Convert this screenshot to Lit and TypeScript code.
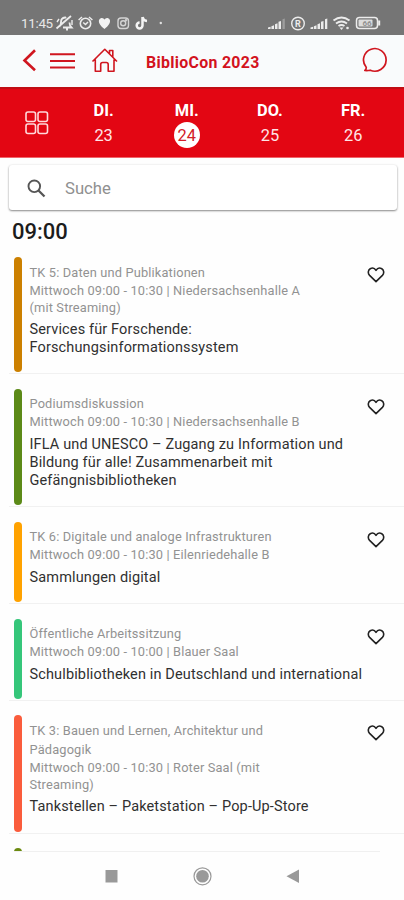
import { LitElement, html, css, svg } from "lit";
import { customElement, property } from "lit/decorators.js";
import { classMap } from "lit/directives/class-map.js";

interface Session {
  color: string;
  track: string[];
  meta: string[];
  title: string[];
}

const DAYS = [
  { name: "DI.", date: "23", active: false },
  { name: "MI.", date: "24", active: true },
  { name: "DO.", date: "25", active: false },
  { name: "FR.", date: "26", active: false },
];

const SESSIONS: Session[] = [
  {
    color: "#cc8000",
    track: ["TK 5: Daten und Publikationen"],
    meta: ["Mittwoch 09:00 - 10:30 | Niedersachsenhalle A", "(mit Streaming)"],
    title: ["Services für Forschende:", "Forschungsinformationssystem"],
  },
  {
    color: "#5c8a18",
    track: ["Podiumsdiskussion"],
    meta: ["Mittwoch 09:00 - 10:30 | Niedersachsenhalle B"],
    title: ["IFLA und UNESCO – Zugang zu Information und", "Bildung für alle! Zusammenarbeit mit", "Gefängnisbibliotheken"],
  },
  {
    color: "#ffa200",
    track: ["TK 6: Digitale und analoge Infrastrukturen"],
    meta: ["Mittwoch 09:00 - 10:30 | Eilenriedehalle B"],
    title: ["Sammlungen digital"],
  },
  {
    color: "#35c67a",
    track: ["Öffentliche Arbeitssitzung"],
    meta: ["Mittwoch 09:00 - 10:00 | Blauer Saal"],
    title: ["Schulbibliotheken in Deutschland und international"],
  },
  {
    color: "#fa5c3c",
    track: ["TK 3: Bauen und Lernen, Architektur und", "Pädagogik"],
    meta: ["Mittwoch 09:00 - 10:30 | Roter Saal (mit", "Streaming)"],
    title: ["Tankstellen – Paketstation – Pop-Up-Store"],
  },
  { color: "#6b8a10", track: [], meta: [], title: [] },
];

@customElement("session-row")
export class SessionRow extends LitElement {
  @property({ attribute: false }) session!: Session;

  static styles = css`
    :host { display: block; margin-left: 9px; }
    .row { display: flex; padding: 0 0 1px 5px; border-bottom: 1px solid #f1f1f1; margin-bottom: 14.4px; }
    .bar { width: 8px; border-radius: 4px; flex: none; }
    .text { flex: 1; min-width: 0; min-height: 60px; padding: 5.5px 0 14.9px 7.5px; white-space: nowrap; }
    .track { font-size: 12.8px; line-height: 19px; color: #929292; letter-spacing: 0.16px; }
    .meta { font-size: 12.8px; line-height: 17px; color: #929292; letter-spacing: 0.16px; }
    .title { margin-top: 5.6px; font-size: 14.5px; line-height: 18.2px; color: #303030; letter-spacing: 0.14px; }
    .heart { flex: none; width: 18px; height: 16px; margin: 10px 19px 0 0; }
  `;

  render() {
    const s = this.session;
    return html`<div class="row">
      <div class="bar" style="background:${s.color}"></div>
      <div class="text">
        ${s.track.map((t) => html`<div class="track">${t}</div>`)}
        ${s.meta.map((t) => html`<div class="meta">${t}</div>`)}
        <div class="title">${s.title.map((t) => html`<div>${t}</div>`)}</div>
      </div>
      <svg class="heart" viewBox="0 0 18 16" fill="none" stroke="#222" stroke-width="1.6" stroke-linejoin="round">
        <path d="M9 14.6 2.6 8.4C.6 6.300 1 3 3.200 1.700 5.300.600 7.700 1.200 9 3.400 10.300 1.200 12.700.600 14.800 1.700 17 3 17.400 6.300 15.400 8.400Z" />
      </svg>
    </div>`;
  }
}

const signal = (last: string) => svg`
  <path d="M0 12v-1.500l2.600-.7V12zM3.400 12V9.200l2.600-.9V12zM7 12V7.200l2.500-.9V12zM10.500 12V4.800l2.500-.9V12z" fill="#ececec"/>
  <path d="M14.500 12V2.300l2.300-.8V12z" fill=${last}/>`;

@customElement("app-root")
export class AppRoot extends LitElement {
  static styles = css`
    :host { display: flex; flex-direction: column; width: 404px; height: 900px; overflow: hidden; background: #fefefe; font-family: Roboto, "Liberation Sans", sans-serif; }
    .status { height: 35px; flex: none; box-sizing: border-box; padding: 13px 0 0 21px; display: flex; background: #757575; color: #e8e8e8; }
    .clock { font-size: 13.4px; line-height: 21px; width: 34px; letter-spacing: -0.3px; white-space: nowrap; }
    .status svg { flex: none; display: block; }
    .status .right { margin-left: 100px; }
    .header { height: 52px; flex: none; display: flex; align-items: center; background: #f9fbfc; box-sizing: border-box; padding: 0 0 1px 22px; }
    .header svg { flex: none; display: block; }
    .brand { flex: none; width: 216px; margin-left: 28px; padding-top: 4px; font-size: 15.9px; line-height: 20px; font-weight: 700; letter-spacing: 0.3px; color: #d3131d; }
    .days { height: 71px; flex: none; box-sizing: border-box; border-top: 2px solid #c00d14; border-bottom: 1px solid #f0666c; background: #e30613; color: #fff; display: flex; padding-left: 25px; }
    .grid { width: 24px; height: 24px; margin: 22px 13px 0 0; flex: none; }
    .day { width: 83.2px; flex: none; display: flex; flex-direction: column; align-items: center; padding-top: 11px; }
    .name { font-size: 16.4px; line-height: 21px; font-weight: 700; }
    .date { width: 26px; height: 26px; margin-top: 1px; border-radius: 50%; font-size: 16.4px; line-height: 28px; text-align: center; color: #ffe5e6; }
    .date.active { background: #fff; color: #d3202a; }
    .search { flex: none; height: 45px; margin: 7px 7px 0 9px; display: flex; align-items: center; border-radius: 3px; background: #fff; box-shadow: 0 1px 2px rgba(0, 0, 0, 0.45), 0 0 3px rgba(0, 0, 0, 0.06); box-sizing: border-box; padding: 1px 0 0 18px; font-size: 16.7px; color: #909090; }
    .search svg { margin: 1px 19px 0 0; width: 19px; height: 19px; }
    .hour { flex: none; height: 47px; padding: 9px 0 0 12px; box-sizing: border-box; font-size: 22px; line-height: 26px; font-weight: 500; color: #1c1c1c; }
    .list { height: 594px; flex: none; overflow: hidden; }
    .nav { flex: 1; display: flex; justify-content: center; border-top: 1px solid #f0f0f0; margin: 0 24px 0 14px; }
    .nav svg { display: block; flex: none; width: 200px; height: 30px; margin: 10px 0 0 9px; }
  `;

  render() {
    return html`
      <div class="status">
        <div class="clock">11:45</div>
        <svg width="112" height="20" viewBox="55 13 112 20" fill="none" stroke="#ececec" stroke-width="1.400">
          <path d="M56.500 28.500 71 16M59.500 26.500q1.500-1.500 1.500-4.500 0-4 4-4.500M63 27.500h8.500q-2-2-2-5M66 17l-1 1M66 29.500h2" stroke-width="1.800"/>
          <path d="m57 22 2-3M72 20v5" />
          <circle cx="85.500" cy="23.500" r="5.200" stroke-width="1.600"/>
          <path d="M83.200 22.500 85.500 24.500 88 22M78.600 20l3.400-3M92.400 20l-3.400-3" stroke-width="1.500"/>
          <path d="M104.500 29C96 22.500 99 18 102 18q1.700 0 2.500 1.500Q105.300 18 107 18c3 0 6 4.500-2.500 11Z" fill="#f2f2f2" stroke="none"/>
          <rect x="118" y="18" width="10.500" height="10.500" rx="3" stroke="#d4d4d4"/>
          <circle cx="123.200" cy="23.300" r="2.500" stroke="#d4d4d4"/><circle cx="126" cy="20.300" r=".5" stroke="#d4d4d4"/>
          <path d="M142.500 17v8.500a2.900 2.900 0 1 1-2.900-2.900M142.500 17q.7 3.700 4.500 4" stroke-width="2.500" stroke="#f4f4f4"/>
          <circle cx="160.800" cy="23" r="1.200" fill="#e0e0e0" stroke="none"/>
        </svg>
        <svg class="right" width="118" height="20" viewBox="267 13 118 20" fill="none">
          <g transform="translate(268 17)">${signal("#9d9d9d")}</g>
          <circle cx="298" cy="23.500" r="6.300" stroke="#ececec" stroke-width="1.400"/>
          <text x="298" y="26.800" text-anchor="middle" font-size="9" font-weight="700" fill="#ececec">R</text>
          <g transform="translate(310.500 17)">${signal("#ececec")}</g>
          <g stroke="#ececec" stroke-width="1.900"><path d="M333.500 20.500q8-6 16 0M336 23.500q5.500-4 11 0M338.500 26q3-2 6 0"/></g>
          <path d="m339.500 27.500 2 2.500 2-2.500z" fill="#ececec"/><circle cx="347.500" cy="28" r="1.300" fill="#ececec"/>
          <rect x="356.500" y="17.500" width="21" height="11" rx="3" stroke="#ececec" stroke-width="1.500"/>
          <rect x="358.500" y="19.500" width="14" height="7" rx="1" fill="#dcdcdc"/>
          <path d="M379.200 20.500v5" stroke="#ececec" stroke-width="2"/>
          <text x="367" y="26.300" text-anchor="middle" font-size="8" font-weight="700" fill="#929292">66</text>
        </svg>
      </div>

      <div class="header">
        <svg width="96" height="30" viewBox="22 46 96 30" fill="none" stroke="#d0161f">
          <path d="M35 50.300 24.500 60.500 35 70.300" stroke-width="2.600"/>
          <path d="M50 54.300H75M50 61H75M50 67.500H75" stroke-width="1.900"/>
          <path d="m92.500 61.500 12.300-12.200 12.200 12.200M95.300 59.500V71.200h5.400V64.500q0-2 2-2h3.500q2 0 2 2v6.700h5.800V59.500M109.500 53.500V50.500h3.300v6.300" stroke-width="1.600" stroke-linejoin="round"/>
        </svg>
        <div class="brand">BiblioCon 2023</div>
        <svg width="26" height="28" viewBox="362 47 26 28" fill="none" stroke="#d0161f" stroke-width="1.700">
          <path d="M364.800 70.500q1.700-1.200 1.400-3.300a11.300 11.300 0 1 1 4 3q-2.700.7-5.400.3Z" stroke-linejoin="round"/>
        </svg>
      </div>

      <div class="days">
        <svg class="grid" viewBox="0 0 24 24" fill="none" stroke="#ffd9db" stroke-width="1.600">
          <rect x="1" y="1" width="9.500" height="9.500" rx="2"/><rect x="13" y="1" width="9.500" height="9.500" rx="2"/>
          <rect x="1" y="13" width="9.500" height="9.500" rx="2"/><rect x="13" y="13" width="9.500" height="9.500" rx="2"/>
        </svg>
        ${DAYS.map((d) => html`<div class="day"><div class="name">${d.name}</div><div class=${classMap({ date: true, active: d.active })}>${d.date}</div></div>`)}
      </div>

      <div class="search">
        <svg viewBox="0 0 19 19" fill="none" stroke="#555" stroke-width="1.900"><circle cx="7.300" cy="7.300" r="5.800"/><path d="m11.500 11.500 6 6" stroke-width="2.300"/></svg>
        <span>Suche</span>
      </div>
      <div class="hour">09:00</div>
      <div class="list">${SESSIONS.map((s) => html`<session-row .session=${s}></session-row>`)}</div>
      <div class="nav">
        <svg viewBox="102 862 200 30" fill="#999">
          <rect x="105.500" y="870" width="12" height="12.500"/>
          <circle cx="202.500" cy="876.300" r="6.300"/><circle cx="202.500" cy="876.300" r="8.500" fill="none" stroke="#999" stroke-width="1.200"/>
          <path d="M286.500 876.300 299 869.500v13.500z"/>
        </svg>
      </div>
    `;
  }
}
